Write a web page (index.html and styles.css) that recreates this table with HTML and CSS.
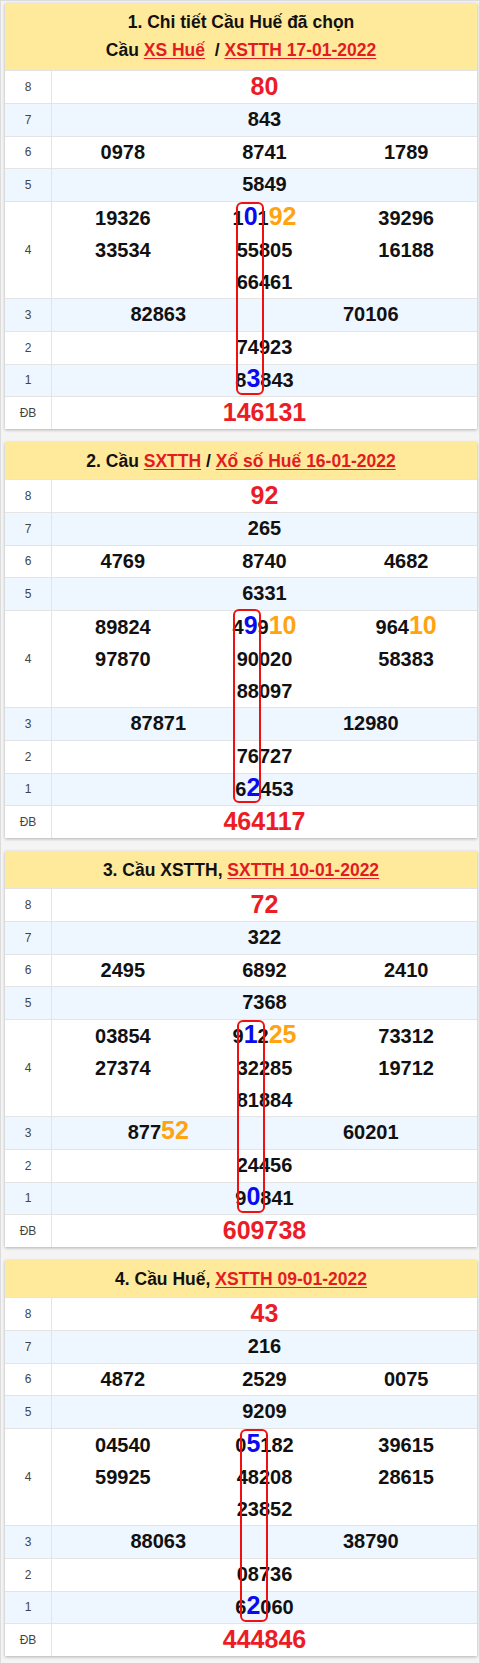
FILE: index.html
```html
<!DOCTYPE html>
<html lang="vi">
<head>
<meta charset="utf-8">
<title>Cầu Huế</title>
<link rel="stylesheet" href="styles.css">
</head>
<body>
<div class="page">

  <section class="card">
    <header class="card-head two">
      <div>1. Chi tiết Cầu Huế đã chọn</div>
      <div>Cầu <a href="#">XS Huế</a>&nbsp; / <a href="#">XSTTH 17-01-2022</a></div>
    </header>
    <div class="rows">
      <div class="row"><div class="lbl">8</div><div class="val c1"><span class="big">80</span></div></div>
      <div class="row alt"><div class="lbl">7</div><div class="val c1"><span>843</span></div></div>
      <div class="row"><div class="lbl">6</div><div class="val c3"><span>0978</span><span>8741</span><span>1789</span></div></div>
      <div class="row alt"><div class="lbl">5</div><div class="val c1"><span>5849</span></div></div>
      <div class="row"><div class="lbl">4</div><div class="val c3">
        <div class="stack"><span>19326</span><span>33534</span></div>
        <div class="stack"><span>1<b class="hb">0</b>1<b class="ho">92</b></span><span>55805</span><span>66461</span></div>
        <div class="stack"><span>39296</span><span>16188</span></div>
      </div></div>
      <div class="row alt"><div class="lbl">3</div><div class="val c2"><span>82863</span><span>70106</span></div></div>
      <div class="row"><div class="lbl">2</div><div class="val c1"><span>74923</span></div></div>
      <div class="row alt"><div class="lbl">1</div><div class="val c1"><span>8<b class="hb">3</b>843</span></div></div>
      <div class="row"><div class="lbl">ĐB</div><div class="val c1"><span class="big">146131</span></div></div>
      <div class="bridge b1"></div>
    </div>
  </section>

  <section class="card">
    <header class="card-head">
      <div>2. Cầu <a href="#">SXTTH</a> / <a href="#">Xổ số Huế 16-01-2022</a></div>
    </header>
    <div class="rows">
      <div class="row"><div class="lbl">8</div><div class="val c1"><span class="big">92</span></div></div>
      <div class="row alt"><div class="lbl">7</div><div class="val c1"><span>265</span></div></div>
      <div class="row"><div class="lbl">6</div><div class="val c3"><span>4769</span><span>8740</span><span>4682</span></div></div>
      <div class="row alt"><div class="lbl">5</div><div class="val c1"><span>6331</span></div></div>
      <div class="row"><div class="lbl">4</div><div class="val c3">
        <div class="stack"><span>89824</span><span>97870</span></div>
        <div class="stack"><span>4<b class="hb">9</b>9<b class="ho">10</b></span><span>90020</span><span>88097</span></div>
        <div class="stack"><span>964<b class="ho">10</b></span><span>58383</span></div>
      </div></div>
      <div class="row alt"><div class="lbl">3</div><div class="val c2"><span>87871</span><span>12980</span></div></div>
      <div class="row"><div class="lbl">2</div><div class="val c1"><span>76727</span></div></div>
      <div class="row alt"><div class="lbl">1</div><div class="val c1"><span>6<b class="hb">2</b>453</span></div></div>
      <div class="row"><div class="lbl">ĐB</div><div class="val c1"><span class="big">464117</span></div></div>
      <div class="bridge b2"></div>
    </div>
  </section>

  <section class="card">
    <header class="card-head">
      <div>3. Cầu XSTTH, <a href="#">SXTTH 10-01-2022</a></div>
    </header>
    <div class="rows">
      <div class="row"><div class="lbl">8</div><div class="val c1"><span class="big">72</span></div></div>
      <div class="row alt"><div class="lbl">7</div><div class="val c1"><span>322</span></div></div>
      <div class="row"><div class="lbl">6</div><div class="val c3"><span>2495</span><span>6892</span><span>2410</span></div></div>
      <div class="row alt"><div class="lbl">5</div><div class="val c1"><span>7368</span></div></div>
      <div class="row"><div class="lbl">4</div><div class="val c3">
        <div class="stack"><span>03854</span><span>27374</span></div>
        <div class="stack"><span>9<b class="hb">1</b>2<b class="ho">25</b></span><span>32285</span><span>81884</span></div>
        <div class="stack"><span>73312</span><span>19712</span></div>
      </div></div>
      <div class="row alt"><div class="lbl">3</div><div class="val c2"><span>877<b class="ho">52</b></span><span>60201</span></div></div>
      <div class="row"><div class="lbl">2</div><div class="val c1"><span>24456</span></div></div>
      <div class="row alt"><div class="lbl">1</div><div class="val c1"><span>9<b class="hb">0</b>841</span></div></div>
      <div class="row"><div class="lbl">ĐB</div><div class="val c1"><span class="big">609738</span></div></div>
      <div class="bridge b3"></div>
    </div>
  </section>

  <section class="card">
    <header class="card-head">
      <div>4. Cầu Huế, <a href="#">XSTTH 09-01-2022</a></div>
    </header>
    <div class="rows">
      <div class="row"><div class="lbl">8</div><div class="val c1"><span class="big">43</span></div></div>
      <div class="row alt"><div class="lbl">7</div><div class="val c1"><span>216</span></div></div>
      <div class="row"><div class="lbl">6</div><div class="val c3"><span>4872</span><span>2529</span><span>0075</span></div></div>
      <div class="row alt"><div class="lbl">5</div><div class="val c1"><span>9209</span></div></div>
      <div class="row"><div class="lbl">4</div><div class="val c3">
        <div class="stack"><span>04540</span><span>59925</span></div>
        <div class="stack"><span>0<b class="hb">5</b>182</span><span>48208</span><span>23852</span></div>
        <div class="stack"><span>39615</span><span>28615</span></div>
      </div></div>
      <div class="row alt"><div class="lbl">3</div><div class="val c2"><span>88063</span><span>38790</span></div></div>
      <div class="row"><div class="lbl">2</div><div class="val c1"><span>08736</span></div></div>
      <div class="row alt"><div class="lbl">1</div><div class="val c1"><span>6<b class="hb">2</b>060</span></div></div>
      <div class="row"><div class="lbl">ĐB</div><div class="val c1"><span class="big">444846</span></div></div>
      <div class="bridge b4"></div>
    </div>
  </section>

</div>
</body>
</html>
```

FILE: styles.css
```css
html, body {
  margin: 0;
  padding: 0;
}

body {
  font-family: "Liberation Sans", Arial, sans-serif;
  background: #f4f4f4;
}

.page {
  box-sizing: border-box;
  width: 480px;
  min-height: 1663px;
  border: 1px solid #dcdcdc;
  background: #f4f4f4;
  padding: 2px 2px 6px 4px;
}

.card {
  background: #fff;
  box-shadow: 0 1px 3px rgba(0, 0, 0, 0.28);
  margin-bottom: 13px;
}

.card-head {
  background: #ffe99b;
  text-align: center;
  font-weight: bold;
  font-size: 17.5px;
  line-height: 28px;
  padding: 5px 0 4px;
  color: #111;
}

.card-head.two {
  padding: 5px 0 6px;
}

.card-head a {
  color: #e31b23;
  text-decoration: underline;
  text-underline-offset: 2px;
}

.rows {
  position: relative;
}

.row {
  display: flex;
  box-sizing: border-box;
  min-height: 32.75px;
  border-top: 1px solid #e4e4e4;
}

.row.alt {
  background: #eef6ff;
}

.lbl {
  flex: none;
  width: 46px;
  border-right: 1px solid #e4e4e4;
  display: flex;
  align-items: center;
  justify-content: center;
  font-size: 12px;
  color: #444;
}

.val {
  flex: 1;
  display: grid;
  align-items: center;
  text-align: center;
  font-weight: bold;
  font-size: 20px;
  line-height: 31.75px;
  color: #111;
}

.c1 { grid-template-columns: 1fr; }
.c2 { grid-template-columns: 1fr 1fr; }
.c3 { grid-template-columns: 1fr 1fr 1fr; }

.stack {
  align-self: start;
  display: flex;
  flex-direction: column;
  line-height: 32px;
}

.stack span,
.val > span {
  display: block;
  height: 31.75px;
}

.stack span {
  height: 32px;
}

.big {
  color: #ec1c27;
  font-size: 25px;
}

.hb,
.ho {
  font-size: 25px;
  font-weight: bold;
  line-height: 1;
}

.hb { color: #0a0af0; }
.ho { color: #ffa311; }

.bridge {
  position: absolute;
  box-sizing: border-box;
  width: 28px;
  height: 193px;
  border: 2px solid #f01010;
  border-radius: 6px;
}

.b1 { top: 131.5px; left: 231px; }
.b2 { top: 129.5px; left: 227.5px; height: 194px; }
.b3 { top: 132px; left: 231.5px; }
.b4 { top: 132px; left: 235px; }
```
